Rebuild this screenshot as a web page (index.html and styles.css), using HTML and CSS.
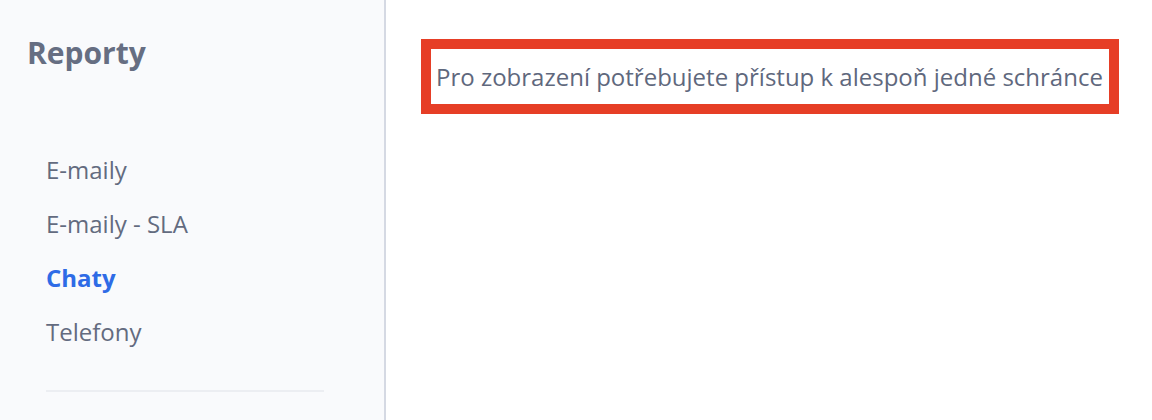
FILE: index.html
```html
<!DOCTYPE html>
<html lang="cs">
<head>
<meta charset="utf-8">
<title>Reporty</title>
<link rel="stylesheet" href="styles.css">
</head>
<body>
<div class="layout">
  <aside class="sidebar">
    <h1 class="sidebar-title">Reporty</h1>
    <nav class="menu">
      <a class="menu-item" href="#">E-maily</a>
      <a class="menu-item" href="#">E-maily - SLA</a>
      <a class="menu-item active" href="#">Chaty</a>
      <a class="menu-item" href="#">Telefony</a>
    </nav>
    <div class="divider"></div>
  </aside>
  <main class="content">
    <div class="notice">Pro zobrazení potřebujete přístup k alespoň jedné schránce</div>
  </main>
</div>
</body>
</html>
```
FILE: styles.css
```css
html, body {
  margin: 0;
  padding: 0;
  height: 100%;
  background: #ffffff;
  font-family: "Open Sans", "Noto Sans", sans-serif;
}
.layout {
  display: flex;
  height: 420px;
}
.sidebar {
  width: 384px;
  flex: none;
  background: #f9fafc;
  border-right: 2px solid #d5d9e3;
  box-sizing: content-box;
  display: flex;
  flex-direction: column;
}
.sidebar-title {
  margin: 33px 0 0 27px;
  font-size: 30px;
  line-height: 40px;
  font-weight: 700;
  color: #666e82;
}
.menu {
  display: flex;
  flex-direction: column;
  margin-top: 70px;
  padding-left: 46px;
}
.menu-item {
  font-size: 24px;
  line-height: 54px;
  color: #636b7f;
  text-decoration: none;
}
.menu-item.active {
  color: #2e6be6;
  font-weight: 700;
}
.divider {
  margin: 31px 0 0 46px;
  width: 278px;
  height: 2px;
  background: #eceef2;
}
.content {
  flex: 1;
  padding: 39px 0 0 35px;
  display: flex;
  align-items: flex-start;
}
.notice {
  border: 10px solid #e63e26;
  padding: 0 6px 0 5px;
  font-size: 24px;
  line-height: 55px;
  color: #5f687d;
  white-space: nowrap;
}
```
